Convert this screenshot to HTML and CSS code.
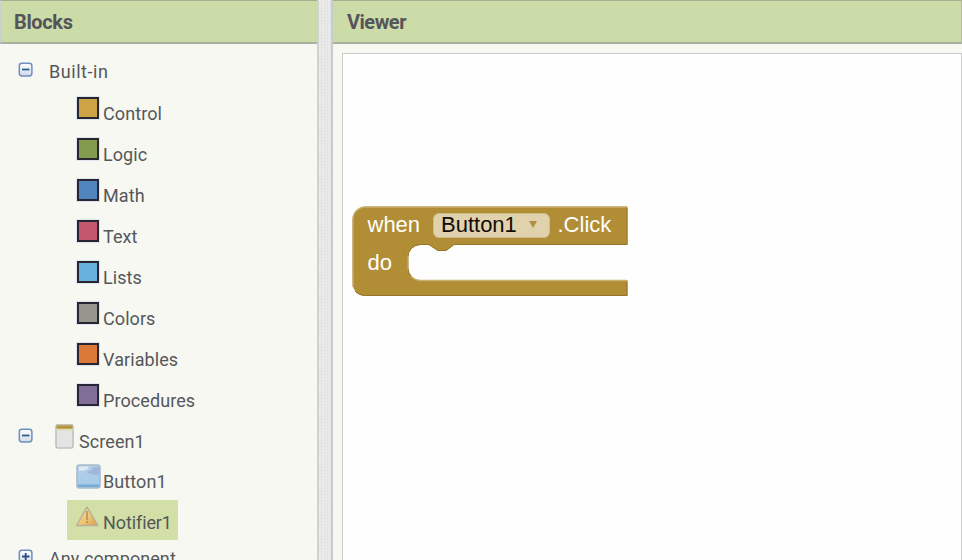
FILE: index.html
```
<!DOCTYPE html>
<html lang="en">
<head>
<meta charset="utf-8">
<title>Blocks editor</title>
<link rel="stylesheet" href="styles.css">
</head>
<body>
<svg class="defs" width="0" height="0">
  <defs>
    <linearGradient id="toggleFill" x2="0" y2="1"><stop offset="0" stop-color="#fff"/><stop offset="1" stop-color="#cfd9e8"/></linearGradient>
    <linearGradient id="glass" x2="0" y2="1"><stop offset="0" stop-color="#b4cfe8"/><stop offset="1" stop-color="#a3cbea"/></linearGradient>
    <linearGradient id="warn" x2="1" y2="1"><stop offset="0" stop-color="#f3dda4"/><stop offset=".55" stop-color="#efc677"/><stop offset="1" stop-color="#dc9f42"/></linearGradient>
    <g id="box"><rect x="1.300" y="1.300" width="12.600" height="12.600" rx="2.600" fill="url(#toggleFill)" stroke="#6f8fbe" stroke-width="1.500"/></g>
  </defs>
</svg>
<div class="app">
  <aside class="sidebar">
    <h2 class="title">Blocks</h2>
    <div class="tree">
      <div class="row root"><svg class="toggle" width="15" height="15"><use href="#box"/><path d="M4 7.500h7.500" stroke="#2e6390" stroke-width="1.800"/></svg><span class="label">Built-in</span></div>
      <div class="row leaf"><i class="swatch control"></i><span class="label">Control</span></div>
      <div class="row leaf"><i class="swatch logic"></i><span class="label">Logic</span></div>
      <div class="row leaf"><i class="swatch math"></i><span class="label">Math</span></div>
      <div class="row leaf"><i class="swatch text"></i><span class="label">Text</span></div>
      <div class="row leaf"><i class="swatch lists"></i><span class="label">Lists</span></div>
      <div class="row leaf"><i class="swatch colors"></i><span class="label">Colors</span></div>
      <div class="row leaf"><i class="swatch variables"></i><span class="label">Variables</span></div>
      <div class="row leaf"><i class="swatch procedures"></i><span class="label">Procedures</span></div>
      <div class="row screen"><svg class="toggle" width="15" height="15"><use href="#box"/><path d="M4 7.500h7.500" stroke="#2e6390" stroke-width="1.800"/></svg>
        <svg class="phone" width="19" height="25"><rect x="1" y="1" width="17" height="23" rx="2" fill="#e4e4e3" stroke="#bfc0c3" stroke-width="1.600"/><path d="M1.500 5.500h16" stroke="#dce0b0" stroke-width="2"/><path d="M1.500 3h16" stroke="#b79439" stroke-width="3.400"/><path d="M1 1h17" stroke="#bcb495"/></svg><span class="label">Screen1</span></div>
      <div class="row button"><svg class="icon" width="25" height="25"><rect x="1" y="1" width="23" height="23" rx="2.500" fill="url(#glass)" stroke="#abb9ca" stroke-width="1.600"/><path d="M10 8Q17 7 17 3h6v8q-8 0-13-3z" fill="#9fb8da"/><path d="M3 2.500h10Q12 7 3 7z" fill="#dceaf2"/><path d="M2 20.500h21V23H2z" fill="#75aed5"/></svg><span class="label">Button1</span></div>
      <div class="row notifier"><svg class="icon" width="25" height="22"><path d="M12 2L23 20.500H1.500z" fill="url(#warn)" stroke="#b5b19a" stroke-width="1.400" stroke-linejoin="round"/><path d="M12 6v9M12 16v2" stroke="#b29361" stroke-width="1.600"/></svg><span class="label">Notifier1</span></div>
      <div class="row any"><svg class="toggle" width="15" height="15"><use href="#box"/><path d="M4 7.500h7.500M7.700 4v7" stroke="#244f84" stroke-width="1.800"/></svg><span class="label">Any component</span></div>
    </div>
  </aside>
  <div class="splitter"></div>
  <main class="viewer">
    <h2 class="title">Viewer</h2>
    <div class="workspace">
      <div class="block">
        <svg class="shape" width="278" height="94" viewBox="350 204 278 94">
          <path d="M365.500 206.500H627.500V245H454L446 251H438L429 245H420.500A13 13 0 0 0 407.500 258V267.500A13 13 0 0 0 420.500 280H627.500V296H365.500A13 13 0 0 1 352.500 283V219.500A13 13 0 0 1 365.500 206.500Z" fill="#b18e35"/>
          <path d="M353 287V219.500A12.500 12.500 0 0 1 365.500 207H626.500M411 276Q414 280.500 421 280.500H626.500" fill="none" stroke="#c8b071" stroke-width="1.300"/>
          <path d="M627 208V244.500H454L446 250.500H438L429 244.500H420.500A12.500 12.500 0 0 0 408 257.500V267.500Q408 273 411 276M627 282V295.500H366Q359 295.500 355 291" fill="none" stroke="#94762b"/>
        </svg>
        <div class="line first"><span class="when">when</span><span class="dropdown"><span class="name">Button1</span><i class="arrow"></i></span><span class="click">.Click</span></div>
        <div class="line second">do</div>
      </div>
    </div>
  </main>
</div>
</body>
</html>
```
FILE: styles.css
```
* { box-sizing: border-box; }
body { margin: 0; overflow: hidden; background: #f7f8f2; font-family: Roboto, sans-serif; }
.defs { position: absolute; }
.app { display: flex; width: 962px; height: 560px; overflow: hidden; }
.sidebar { width: 317px; flex: none; }
.title { margin: 0; height: 44px; padding: 9px 14px 0; border-top: 1px solid #a5ae90; border-bottom: 2px solid #abaea2; background: #ccdca9; color: #555559; font-size: 20px; line-height: 24px; font-weight: 700; letter-spacing: -.35px; }
.sidebar .title { padding-left: 13px; border-left: 1px solid #cbcecb; }
.viewer .title { border-right: 1px solid #b4bba2; letter-spacing: -.5px; }
.tree { padding-top: 6px; color: #55575b; font-size: 18px; line-height: 22px; }
.row { display: flex; height: 41px; align-items: flex-start; white-space: nowrap; }
.label { padding-top: 12px; letter-spacing: .08px; }
.toggle { flex: none; margin-top: 12px; }
.root, .screen, .any { padding-left: 18px; }
.root .label { margin-left: 16px; padding-top: 11px; letter-spacing: .55px; }
.leaf { padding-left: 77px; }
.swatch { width: 22px; height: 22px; margin: 6px 4px 0 0; border: 2px solid #292634; outline: 1px solid #dfe5ed; }
.control { background: #cca446; }
.logic { background: #829b4d; }
.math { background: #4f86bd; }
.text { background: #c3586c; }
.lists { background: #66b2dc; }
.colors { background: #96968c; }
.variables { background: #db7939; }
.procedures { background: #806d98; }
.screen { height: 40px; }
.screen .toggle { margin-top: 9px; }
.phone { margin: 5px 5px 0 22px; }
.button { padding-left: 76px; }
.button .icon { margin: 5px 2px 0 0; }
.notifier { width: 111px; height: 40px; margin-left: 67px; padding-left: 8px; background: #d2dfa6; }
.notifier .icon { margin: 5px 3px 0 0; }
.notifier .label { letter-spacing: -.1px; }
.any .toggle { margin-top: 9px; }
.any .label { margin-left: 16px; padding-top: 8px; }
.splitter { width: 16px; flex: none; border-left: 2px solid #d1d2d2; border-right: 2px solid #cacbcb; background: repeating-linear-gradient(0deg, transparent 0 2px, #e0e0e066 2px 3px), repeating-linear-gradient(90deg, #ebebec 0 2px, #e3e3e4 2px 3px); }
.viewer { flex: 1; min-width: 0; }
.workspace { margin: 9px 0 0 9px; height: 520px; padding: 150px 0 0 7px; border: 1px solid #ccc; background: #fefefe; }
.block { position: relative; width: 278px; height: 94px; color: #fff; font: 22px/26px "Liberation Sans", sans-serif; }
.shape { position: absolute; left: 0; top: 0; }
.line { position: relative; padding-left: 17.5px; }
.first { display: flex; height: 46px; padding-top: 8px; }
.when { width: 65.5px; }
.dropdown { display: flex; align-items: center; width: 117px; height: 25px; margin-top: 1px; padding-left: 7px; border: 1px solid #d0bc88; border-radius: 6px; background: #dfd2ad; color: #130b09; }
.name { margin-top: -1px; }
.arrow { margin: -3px 0 0 12px; border: 4px solid transparent; border-top: 7px solid #b38f3f; border-bottom: 0; }
.click { margin-left: 7.5px; }
```
